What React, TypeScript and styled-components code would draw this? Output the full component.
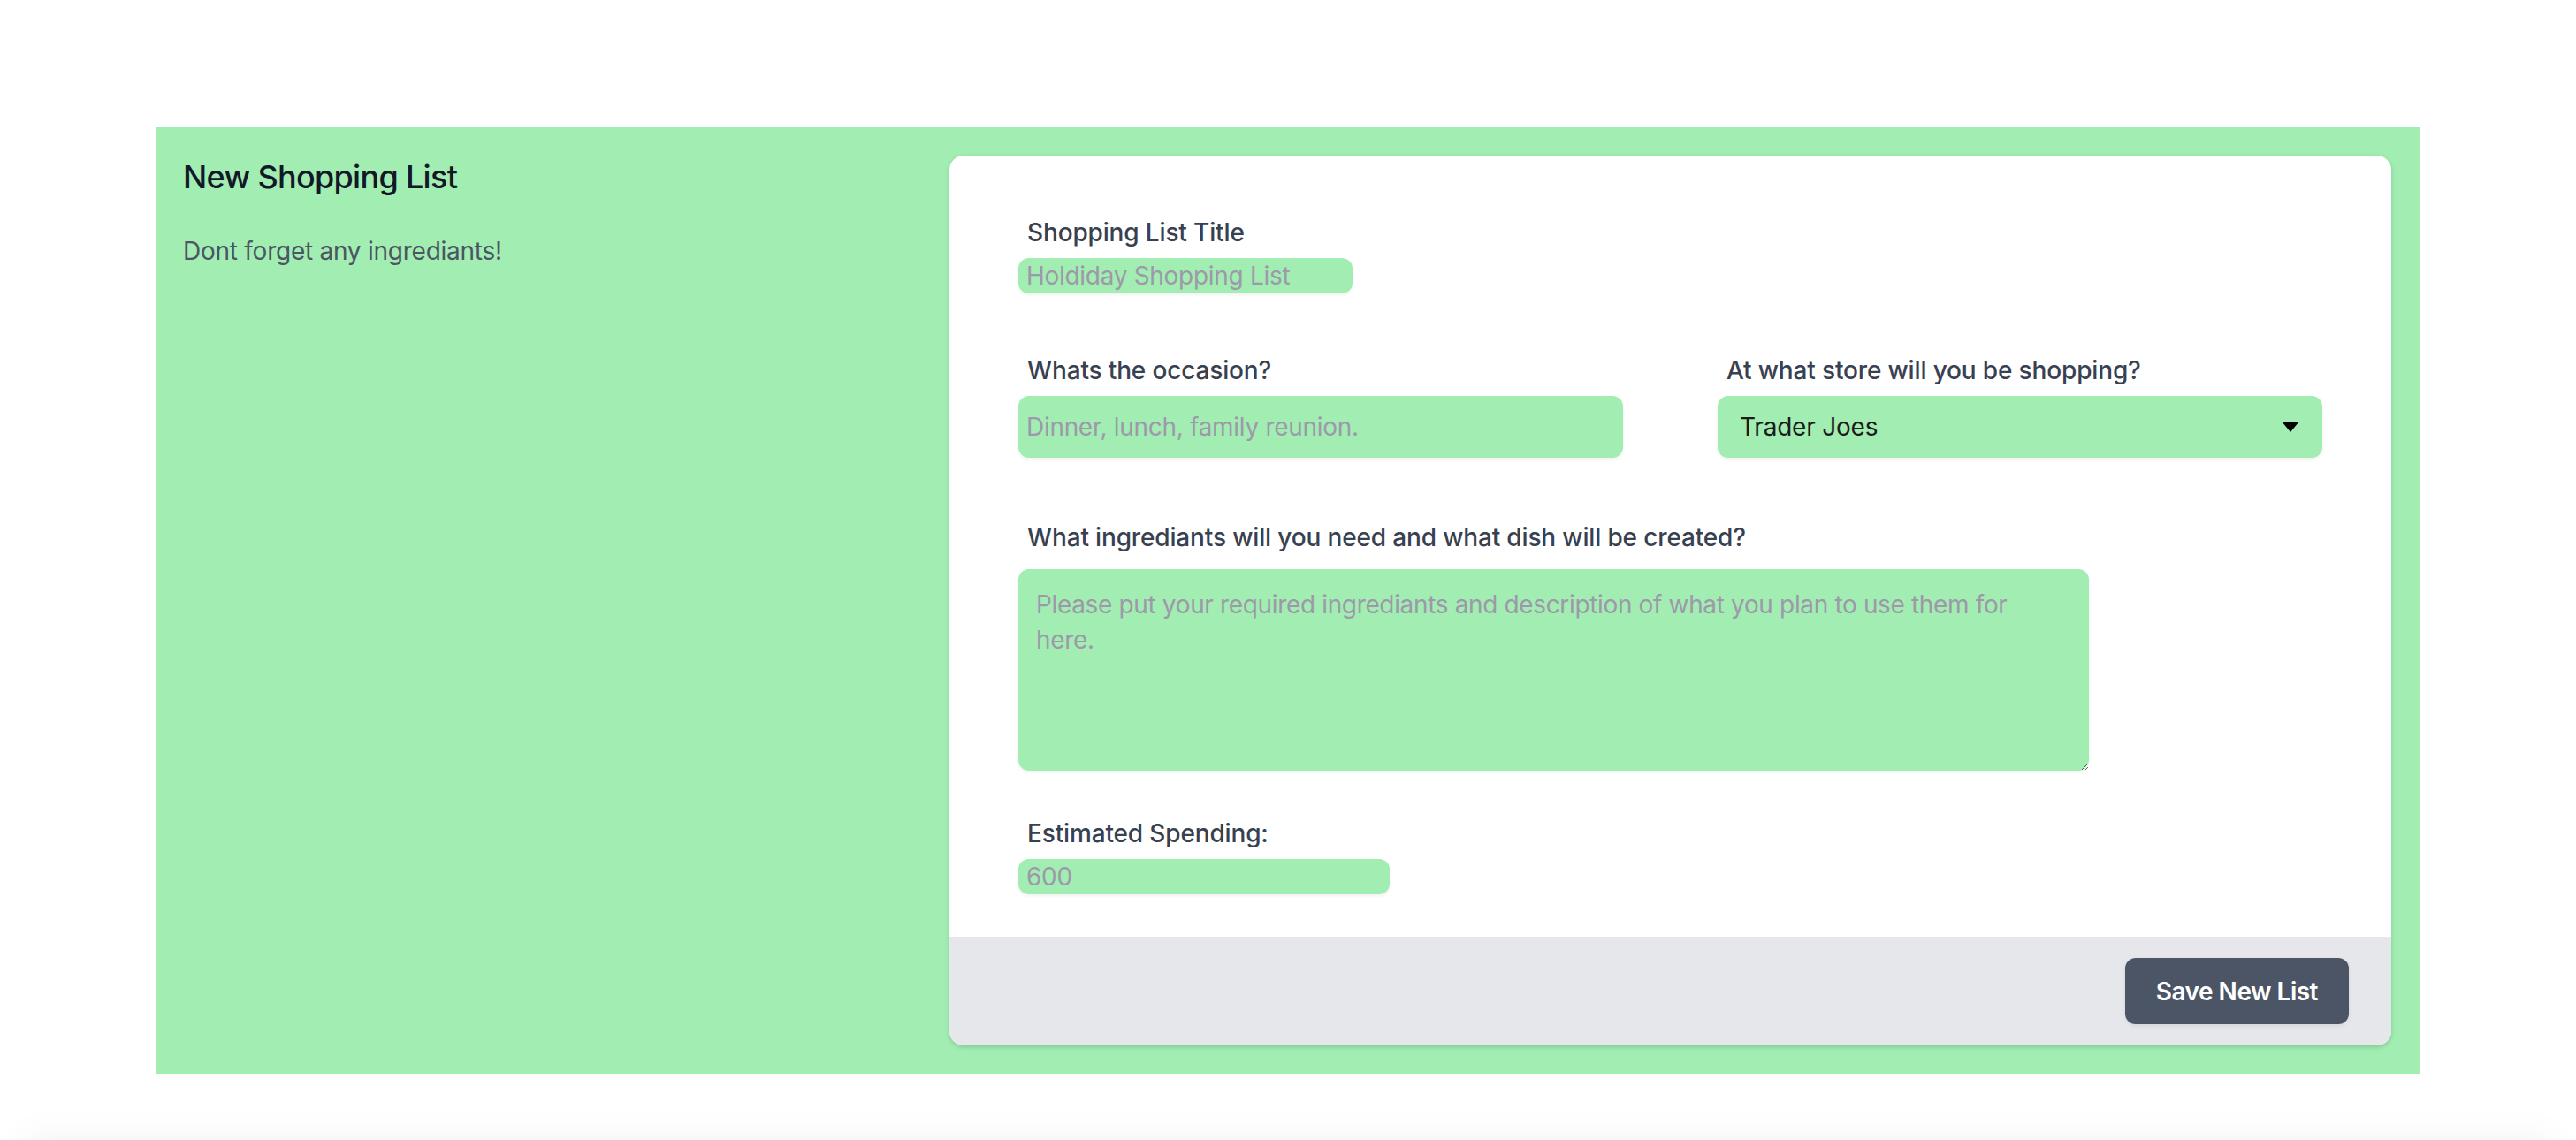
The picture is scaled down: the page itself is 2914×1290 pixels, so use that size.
import React from "react";
import styled, { createGlobalStyle } from "styled-components";

const GlobalStyle = createGlobalStyle`
  html, body {
    margin: 0;
    padding: 0;
    background: #ffffff;
    font-family: Inter, "Noto Sans", "Liberation Sans", sans-serif;
  }
  * { box-sizing: border-box; }
`;

const GREEN = "#a1edb2";

const Page = styled.div`
  padding-top: 144px;
  display: flex;
  flex-direction: column;
  align-items: center;
  overflow: hidden;
`;

const Panel = styled.section`
  width: 2560px;
  background: ${GREEN};
  padding: 32px;
  display: grid;
  grid-template-columns: 1fr 1631px;
  align-items: start;
`;

const Intro = styled.div`
  display: flex;
  flex-direction: column;
  margin-left: -2px;
`;

const Title = styled.h3`
  margin: 0;
  font-size: 36px;
  line-height: 48px;
  font-weight: 500;
  letter-spacing: -0.7px;
  color: #111827;
`;

const Subtitle = styled.p`
  margin: 40px 0 0;
  font-size: 28px;
  line-height: 40px;
  letter-spacing: -0.25px;
  color: #4b5563;
`;

const Card = styled.form`
  background: #ffffff;
  border-radius: 16px;
  overflow: hidden;
  box-shadow: 0 2px 6px rgba(0, 0, 0, 0.1), 0 2px 4px rgba(0, 0, 0, 0.06);
  display: flex;
  flex-direction: column;
`;

const CardBody = styled.div`
  padding: 67px 78px 48px 78px;
  display: flex;
  flex-direction: column;
`;

const Field = styled.div<{ $top?: number; $gap?: number; $width?: number }>`
  display: flex;
  flex-direction: column;
  gap: ${(p) => p.$gap ?? 9}px;
  margin-top: ${(p) => p.$top ?? 0}px;
  width: ${(p) => (p.$width ? `${p.$width}px` : "auto")};
`;

const Row = styled.div<{ $top?: number }>`
  display: grid;
  grid-template-columns: 684px 684px;
  column-gap: 107px;
  margin-top: ${(p) => p.$top ?? 0}px;
`;

const Label = styled.label`
  display: block;
  padding-left: 10px;
  font-size: 28px;
  line-height: 40px;
  font-weight: 500;
  letter-spacing: -0.15px;
  color: #374151;
`;

const TextInput = styled.input<{ $height?: number }>`
  display: block;
  width: 100%;
  height: ${(p) => p.$height ?? 40}px;
  border: none;
  outline: none;
  margin: 0;
  padding: 0 8px 0 9px;
  border-radius: 12px;
  background: ${GREEN};
  box-shadow: 0 2px 4px rgba(0, 0, 0, 0.06);
  font-family: inherit;
  font-size: 28px;
  line-height: 40px;
  letter-spacing: -0.3px;
  color: #1b1b1b;
  &::placeholder {
    color: #9e99aa;
    opacity: 1;
  }
`;

const SelectWrap = styled.div`
  position: relative;
  width: 100%;
`;

const Select = styled.select`
  display: block;
  width: 100%;
  height: 70px;
  border: none;
  outline: none;
  margin: 0;
  padding: 0 60px 0 25px;
  border-radius: 12px;
  background: ${GREEN};
  box-shadow: 0 2px 4px rgba(0, 0, 0, 0.06);
  font-family: inherit;
  font-size: 28px;
  letter-spacing: -0.2px;
  color: #1b1b1b;
  appearance: none;
  -webkit-appearance: none;
`;

const Arrow = styled.svg`
  position: absolute;
  right: 27px;
  top: 30px;
  width: 18px;
  height: 11px;
  pointer-events: none;
`;

const TextArea = styled.textarea`
  display: block;
  width: 1211px;
  height: 228px;
  border: none;
  outline: none;
  margin: 0;
  padding: 20px;
  border-radius: 12px;
  background: ${GREEN};
  box-shadow: 0 2px 4px rgba(0, 0, 0, 0.06);
  font-family: inherit;
  font-size: 28px;
  line-height: 40px;
  letter-spacing: -0.35px;
  color: #1b1b1b;
  resize: vertical;
  &::placeholder {
    color: #9e99aa;
    opacity: 1;
  }
`;

const Footer = styled.div`
  background: #e5e7eb;
  padding: 24px 48px;
  display: flex;
  justify-content: flex-end;
`;

const SaveButton = styled.button`
  height: 75px;
  padding: 0 35px;
  border: none;
  border-radius: 12px;
  background: #4b5565;
  color: #ffffff;
  font-family: inherit;
  font-size: 28px;
  font-weight: 600;
  letter-spacing: -0.5px;
  box-shadow: 0 2px 4px rgba(0, 0, 0, 0.08);
  cursor: pointer;
`;

const BottomEdge = styled.div`
  margin-top: 78px;
  width: 2860px;
  height: 120px;
  background: #ffffff;
  box-shadow: 0 -6px 40px rgba(0, 0, 0, 0.05);
`;

export default function App() {
  return (
    <>
      <GlobalStyle />
      <Page>
        <Panel>
          <Intro>
            <Title>New Shopping List</Title>
            <Subtitle>Dont forget any ingrediants!</Subtitle>
          </Intro>
          <Card onSubmit={(e) => e.preventDefault()}>
            <CardBody>
              <Field $width={378}>
                <Label htmlFor="title">Shopping List Title</Label>
                <TextInput id="title" placeholder="Holdiday Shopping List" />
              </Field>
              <Row $top={67}>
                <Field>
                  <Label htmlFor="occasion">Whats the occasion?</Label>
                  <TextInput
                    id="occasion"
                    $height={70}
                    placeholder="Dinner, lunch, family reunion."
                  />
                </Field>
                <Field>
                  <Label htmlFor="store">At what store will you be shopping?</Label>
                  <SelectWrap>
                    <Select id="store" defaultValue="Trader Joes">
                      <option>Trader Joes</option>
                      <option>Whole Foods</option>
                      <option>Safeway</option>
                    </Select>
                    <Arrow viewBox="0 0 18 11">
                      <path d="M0 0 L18 0 L9 11 Z" fill="#000000" />
                    </Arrow>
                  </SelectWrap>
                </Field>
              </Row>
              <Field $top={70} $gap={16}>
                <Label htmlFor="ingredients">
                  What ingrediants will you need and what dish will be created?
                </Label>
                <TextArea
                  id="ingredients"
                  placeholder={
                    "Please put your required ingrediants and description of what you plan to use them for\nhere."
                  }
                />
              </Field>
              <Field $top={51} $width={420}>
                <Label htmlFor="spending">Estimated Spending:</Label>
                <TextInput id="spending" placeholder="600" />
              </Field>
            </CardBody>
            <Footer>
              <SaveButton type="submit">Save New List</SaveButton>
            </Footer>
          </Card>
        </Panel>
        <BottomEdge />
      </Page>
    </>
  );
}
